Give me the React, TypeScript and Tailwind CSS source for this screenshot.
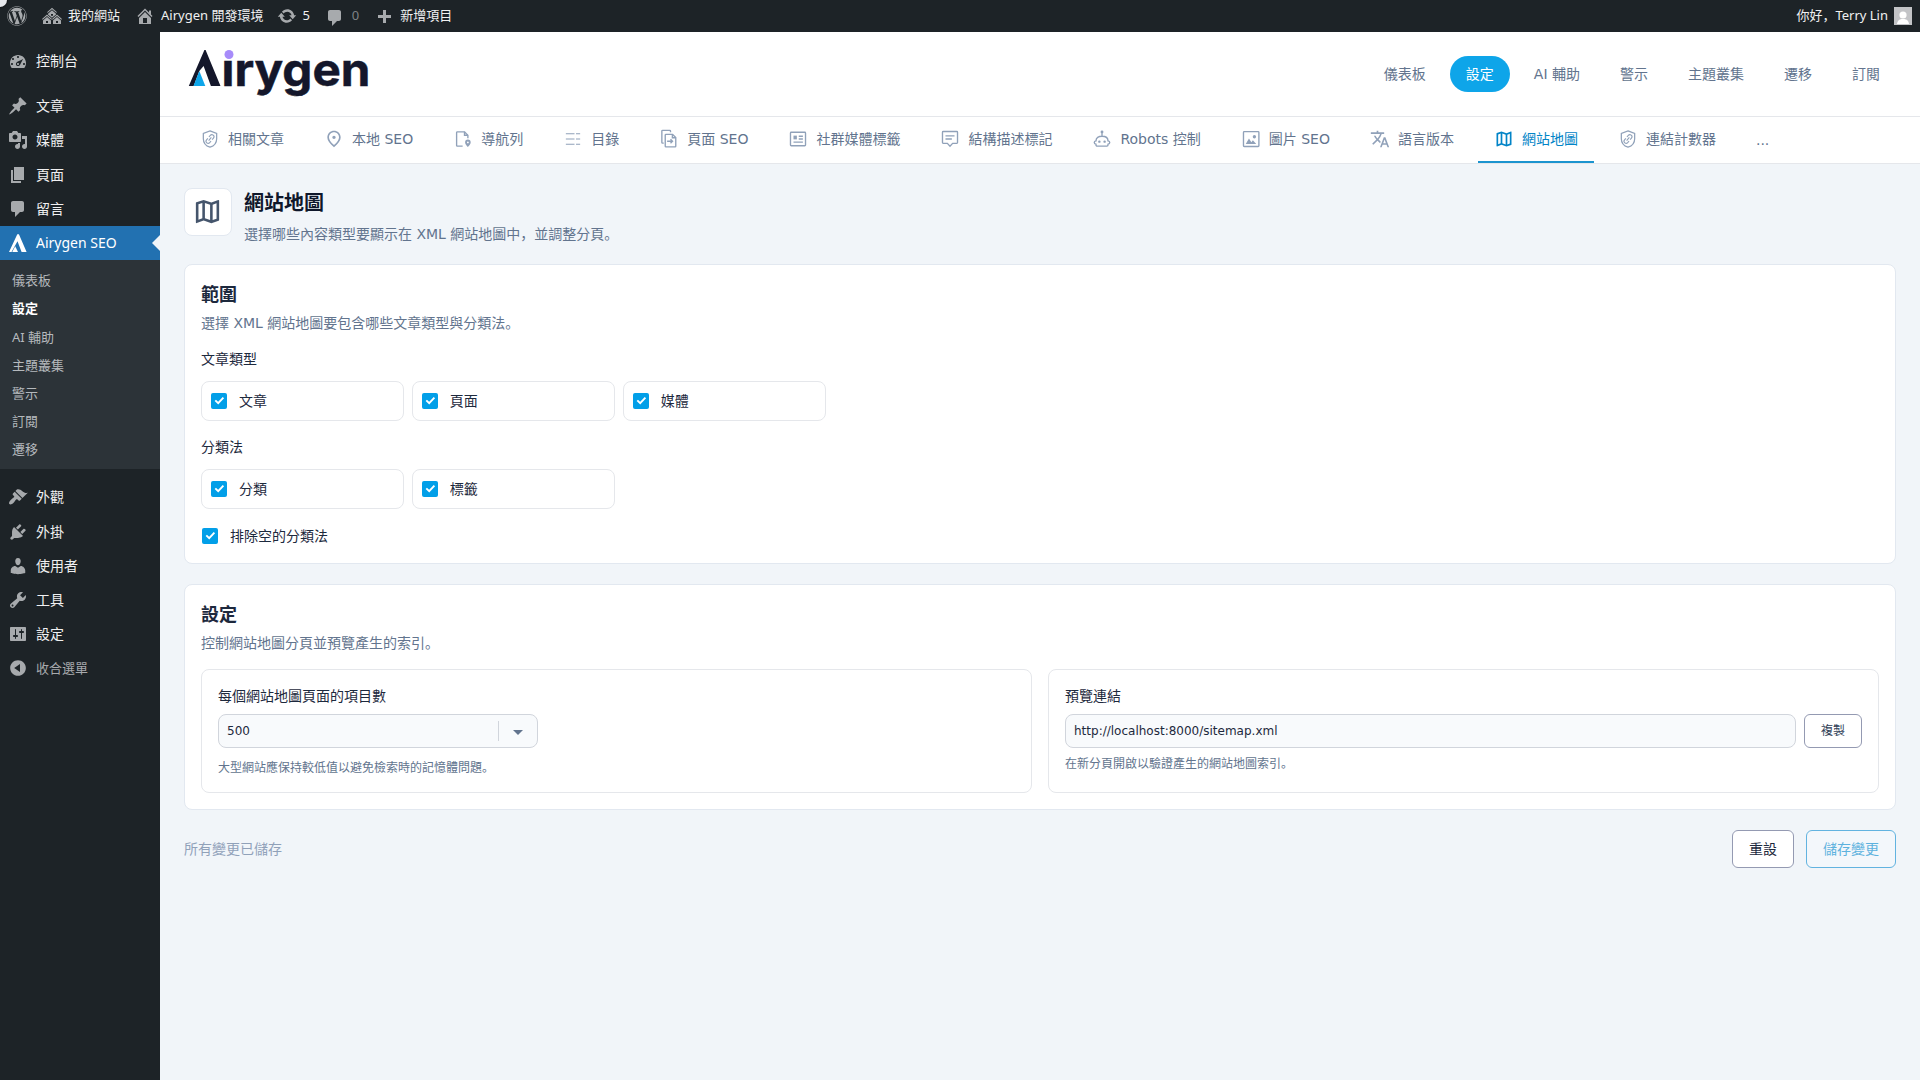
import type { ReactNode, SVGProps } from "react";
import clsx from "clsx";
import { FaWordpress } from "react-icons/fa";
import { MdOutlineMap, MdOutlinePlace, MdTranslate } from "react-icons/md";

type IconProps = SVGProps<SVGSVGElement>;

const DASHICONS = {
  multisite:
    "M14.27 6.87L10 3.14 5.73 6.87 5 6.14l5-4.38 5 4.38zM14 8.42l-4.05 3.43L6 8.38v-.74l4-3.5 4 3.5v.78zM11 9.7V8H9v1.7h2zm-1.73 4.03L5 10 .73 13.73 0 13l5-4.38L10 13zm10 0L15 10l-4.27 3.73L10 13l5-4.38L20 13zM5 11l4 3.5V18H1v-3.5zm10 0l4 3.5V18h-8v-3.5zm-9 6v-2H4v2h2zm10 0v-2h-2v2h2z",
  home: "M16 8.5l1.53 1.53-1.06 1.06L10 4.6l-6.47 6.49-1.06-1.06L10 2.5l4 4v-2h2v4zm-6-2.46l6 5.99V18H4v-5.97zM12 17v-5H8v5h4z",
  update:
    "M10.2 3.28c3.53 0 6.43 2.61 6.92 6h2.08l-3.5 4-3.5-4h2.32c-.45-1.97-2.21-3.45-4.32-3.45-1.45 0-2.73.71-3.54 1.78L4.95 5.66C6.23 4.2 8.11 3.28 10.2 3.28zm-.4 13.44c-3.52 0-6.43-2.61-6.92-6H.8l3.5-4c1.17 1.33 2.33 2.67 3.5 4H5.48c.45 1.97 2.21 3.45 4.32 3.45 1.45 0 2.73-.71 3.54-1.78l1.71 1.95c-1.28 1.46-3.15 2.38-5.25 2.38z",
  comments: "M5 2h9c1.1 0 2 .9 2 2v7c0 1.1-.9 2-2 2h-2l-5 5v-5H5c-1.1 0-2-.9-2-2V4c0-1.1.9-2 2-2z",
  plus: "M17 7v3h-5v5H9v-5H4V7h5V2h3v5h5z",
  dashboard:
    "M3.76 17h12.48c1.1-1.37 1.76-3.11 1.76-5 0-4.42-3.58-8-8-8s-8 3.58-8 8c0 1.89.66 3.63 1.76 5zM9 6c0-.55.45-1 1-1s1 .45 1 1c0 .56-.45 1-1 1s-1-.44-1-1zM4 8c0-.55.45-1 1-1s1 .45 1 1c0 .56-.45 1-1 1s-1-.44-1-1zm4.52 3.4c.84-.83 6.51-3.5 6.51-3.5s-2.66 5.68-3.49 6.51c-.84.84-2.18.84-3.02 0-.83-.83-.83-2.18 0-3.01zM3 13c0-.55.45-1 1-1s1 .45 1 1c0 .56-.45 1-1 1s-1-.44-1-1zm6 0c0-.55.45-1 1-1s1 .45 1 1c0 .56-.45 1-1 1s-1-.44-1-1zm6 0c0-.55.45-1 1-1s1 .45 1 1c0 .56-.45 1-1 1s-1-.44-1-1z",
  post: "M10.44 3.02l1.82-1.82 6.36 6.35-1.83 1.82c-1.05-.68-2.48-.57-3.41.36l-.75.75c-.92.93-1.04 2.35-.35 3.41l-1.83 1.82-2.41-2.41-2.8 2.79c-.42.42-3.38 2.71-3.8 2.29s1.86-3.39 2.28-3.81l2.79-2.79L4.1 9.36l1.83-1.82c1.05.69 2.48.57 3.4-.36l.75-.75c.93-.92 1.05-2.35.36-3.41z",
  media:
    "M13 11V4c0-.55-.45-1-1-1h-1.67L9 1H5L3.67 3H2c-.55 0-1 .45-1 1v7c0 .55.45 1 1 1h10c.55 0 1-.45 1-1zM7 4.5c1.38 0 2.5 1.12 2.5 2.5S8.38 9.5 7 9.5 4.5 8.38 4.5 7 5.62 4.5 7 4.5zM14 6h5v10.5c0 1.38-1.12 2.5-2.5 2.5S14 17.88 14 16.5s1.12-2.5 2.5-2.5c.17 0 .34.02.5.05V9h-3V6zm-4 8.05V13h2v3.5c0 1.38-1.12 2.5-2.5 2.5S7 17.88 7 16.5 8.12 14 9.5 14c.17 0 .34.02.5.05z",
  page: "M6 15V2h10v13H6zm-1 1h8v2H3V5h2v11z",
  appearance:
    "M14.48 11.06L7.41 3.99l1.5-1.5c.5-.56 2.3-.47 3.51.32 1.21.8 1.43 1.28 2.91 2.1 1.18.64 2.45 1.26 4.45.85zm-.71.71L6.7 4.7 4.93 6.47c-.39.39-.39 1.02 0 1.41l1.06 1.06c.39.39.39 1.03 0 1.42-.6.6-1.43 1.11-2.21 1.69-.35.26-.7.53-1.01.84C1.43 14.23.4 16.08 1.4 17.07c.99 1 2.84-.03 4.18-1.36.31-.31.58-.66.85-1.02.57-.78 1.08-1.61 1.69-2.21.39-.39 1.02-.39 1.41 0l1.06 1.06c.39.39 1.02.39 1.41 0z",
  plugins:
    "M13.11 4.36L9.87 7.6 8 5.73l3.24-3.24c.35-.34 1.05-.2 1.56.32.52.51.66 1.21.31 1.55zm-8 1.77l.91-1.12 9.01 9.01-1.19.84c-.71.71-2.63 1.16-3.82 1.16H6.14L4.9 17.26c-.59.59-1.54.59-2.12 0-.59-.58-.59-1.53 0-2.12l1.24-1.24v-3.88c0-1.13.4-3.19 1.09-3.89zm7.26 3.97l3.24-3.24c.34-.35 1.04-.21 1.55.31.52.51.66 1.21.31 1.55l-3.24 3.25z",
  users:
    "M10 9.25c-2.27 0-2.73-3.44-2.73-3.44C7 4.02 7.82 2 9.97 2c2.16 0 2.98 2.02 2.71 3.81 0 0-.41 3.44-2.68 3.44zm0 2.57L12.72 10c2.39 0 4.52 2.33 4.52 4.53v2.49s-3.65 1.13-7.24 1.13c-3.65 0-7.24-1.13-7.24-1.13v-2.49c0-2.25 1.94-4.48 4.47-4.48z",
  tools:
    "M16.68 9.77c-1.34 1.34-3.3 1.67-4.95.99l-5.41 6.52c-.99.99-2.59.99-3.58 0s-.99-2.59 0-3.57l6.52-5.42c-.68-1.65-.35-3.61.99-4.95 1.28-1.28 3.12-1.62 4.72-1.06l-2.89 2.89 2.82 2.82 2.86-2.87c.53 1.58.18 3.39-1.08 4.65zM3.81 16.21c.4.39 1.04.39 1.43 0 .4-.4.4-1.04 0-1.43-.39-.4-1.03-.4-1.43 0-.39.39-.39 1.03 0 1.43z",
  settings:
    "M18 16V4c0-.55-.45-1-1-1H3c-.55 0-1 .45-1 1v12c0 .55.45 1 1 1h14c.55 0 1-.45 1-1zM8 11h1c.55 0 1 .45 1 1s-.45 1-1 1H8v1.5c0 .28-.22.5-.5.5s-.5-.22-.5-.5V13H6c-.55 0-1-.45-1-1s.45-1 1-1h1V5.5c0-.28.22-.5.5-.5s.5.22.5.5V11zm5-2h-1c-.55 0-1-.45-1-1s.45-1 1-1h1V5.5c0-.28.22-.5.5-.5s.5.22.5.5V7h1c.55 0 1 .45 1 1s-.45 1-1 1h-1v5.5c0 .28-.22.5-.5.5s-.5-.22-.5-.5V9z",
  collapse:
    "M10 2.16c4.33 0 7.84 3.51 7.84 7.84s-3.51 7.84-7.84 7.84S2.16 14.33 2.16 10 5.67 2.16 10 2.16zm2 11.72V6.12L6.18 9.97z",
};

type DashiconName = keyof typeof DASHICONS;

function Dashicon({ name, className }: { name: DashiconName; className?: string }) {
  return (
    <svg viewBox="0 0 20 20" fill="currentColor" className={clsx("size-5 shrink-0", className)}>
      <path d={DASHICONS[name]} />
    </svg>
  );
}

function LineIcon({ children, ...props }: IconProps) {
  return (
    <svg viewBox="-1.3 -1.3 26.6 26.6" fill="none" stroke="currentColor" strokeWidth={1.8} {...props}>
      {children}
    </svg>
  );
}

function ShieldLinkIcon(props: IconProps) {
  return (
    <LineIcon viewBox="0 0 24 24" strokeWidth={1.5} {...props}>
      <path d="M12 2.2l8 3v6.4c0 4.9-3.2 8.700-8 10.200-4.800-1.500-8-5.300-8-10.200V5.200z" />
      <g transform="rotate(-50 12 12)" strokeWidth={1.3}>
        <path d="M11 9.500H8.500a2.500 2.500 0 000 5H11M13 9.500h2.500a2.500 2.500 0 010 5H13M9.500 12h5" />
      </g>
    </LineIcon>
  );
}

function PagePinIcon(props: IconProps) {
  return (
    <LineIcon {...props}>
      <path d="M11.500 21.500H4.500a1 1 0 01-1-1v-17a1 1 0 011-1h9.500l4.500 4.500v4" />
      <path d="M14 2.500v4.500h4.500" />
      <path
        d="M18.500 12.800a3.700 3.700 0 00-3.700 3.700c0 2.600 3.700 6 3.700 6s3.700-3.400 3.700-6a3.700 3.700 0 00-3.700-3.700zm0 5a1.200 1.200 0 110-2.400 1.200 1.200 0 010 2.400z"
        fill="currentColor"
        stroke="none"
      />
    </LineIcon>
  );
}

function TocIcon(props: IconProps) {
  return (
    <LineIcon strokeWidth={1.6} {...props}>
      <path d="M2.500 5H14M16 5h5.500M2.500 12H14M16 12h5.500M2.500 19H14M16 19h5.500" />
    </LineIcon>
  );
}

function PageCopyIcon(props: IconProps) {
  return (
    <LineIcon {...props}>
      <path d="M5 17.500H3.500a1 1 0 01-1-1V1.500a1 1 0 011-1H13a1 1 0 011 1V3" />
      <path d="M12 5.800H8a1 1 0 00-1 1v14.700a1 1 0 001 1h12a1 1 0 001-1V10l-4.200-4.200H12z" />
      <path d="M16.500 6v4.300h4.300" />
      <path d="M9.500 15h7M14 12.300l2.700 2.700L14 17.700" />
    </LineIcon>
  );
}

function NewsIcon(props: IconProps) {
  return (
    <LineIcon {...props}>
      <rect x="2" y="3" width="20" height="18" rx="1" />
      <path d="M6 7.500h4.500v5H6z" fill="currentColor" stroke="none" />
      <path d="M13 8.300h5.500M13 12h5.500M6 16.200h12.500" />
    </LineIcon>
  );
}

function CommentLinesIcon(props: IconProps) {
  return (
    <LineIcon {...props}>
      <path d="M3 2h18a1 1 0 011 1v13.800a1 1 0 01-1 1h-5.500L12 21.500l-3.500-3.700H3a1 1 0 01-1-1V3a1 1 0 011-1z" />
      <path d="M6 7.800h12M6 12h8.500" />
    </LineIcon>
  );
}

function RobotIcon(props: IconProps) {
  return (
    <LineIcon {...props}>
      <path d="M4 14.500C4 10.500 7.500 8.300 12 8.300s8 2.200 8 6.200c1.500.2 2.300 1 2.300 2.300 0 1.200-.8 2-2.300 2.200v1a1.500 1.500 0 01-1.500 1.500h-13A1.500 1.500 0 014 20v-1c-1.500-.2-2.300-1-2.300-2.200 0-1.300.8-2.100 2.300-2.300zM12 4v4" />
      <circle cx="12" cy="2.600" r="1.900" fill="currentColor" stroke="none" />
      <circle cx="8.500" cy="15.500" r="1.600" fill="currentColor" stroke="none" />
      <circle cx="15.500" cy="15.500" r="1.600" fill="currentColor" stroke="none" />
    </LineIcon>
  );
}

function PictureIcon(props: IconProps) {
  return (
    <LineIcon {...props}>
      <rect x="2" y="2.200" width="20.500" height="19.800" rx="1" />
      <path d="M5 18.500l4.300-7 3.200 4.700 2-2.400 4.500 4.700z" fill="currentColor" stroke="none" />
      <circle cx="16.500" cy="9" r="2.200" fill="currentColor" stroke="none" />
    </LineIcon>
  );
}

function BrandMark() {
  return (
    <svg viewBox="0 0 20 20" className="size-5 shrink-0" fill="#fff">
      <path d="M9.300 1.200h1.600L18.600 19h-5L9.500 8.200 3.500 19H1z" />
      <path d="M7.200 13.200L10 19H4.200z" />
    </svg>
  );
}

function Logo() {
  return (
    <svg width="190" height="64" viewBox="0 0 190 64" className="block">
      <path d="M16.400 8h1.200l14.900 36h-9.600L15.600 24l-4.300 5L5.700 44H.8z" fill="#14172b" />
      <path d="M11.300 29l6 15H5.500z" fill="#0ea5e9" />
      <text
        x="33.500"
        y="44"
        textLength="149"
        lengthAdjust="spacingAndGlyphs"
        fontSize="46"
        fontWeight="700"
        fill="#14172b"
        stroke="#14172b"
        strokeWidth=".5"
        fontFamily="Inter, sans-serif"
      >
        ırygen
      </text>
      <circle cx="41" cy="12.500" r="4.500" fill="#a78bfa" />
    </svg>
  );
}

const MENU_TOP: { label: string; icon: DashiconName }[] = [
  { label: "文章", icon: "post" },
  { label: "媒體", icon: "media" },
  { label: "頁面", icon: "page" },
  { label: "留言", icon: "comments" },
];

const SUBMENU = ["儀表板", "設定", "AI 輔助", "主題叢集", "警示", "訂閱", "遷移"];

const MENU_BOTTOM: { label: string; icon: DashiconName; muted?: boolean }[] = [
  { label: "外觀", icon: "appearance" },
  { label: "外掛", icon: "plugins" },
  { label: "使用者", icon: "users" },
  { label: "工具", icon: "tools" },
  { label: "設定", icon: "settings" },
  { label: "收合選單", icon: "collapse", muted: true },
];

const NAV = ["儀表板", "設定", "AI 輔助", "警示", "主題叢集", "遷移", "訂閱"];

const TABS: { label: string; icon: (props: { className?: string }) => ReactNode }[] = [
  { label: "相關文章", icon: ShieldLinkIcon },
  { label: "本地 SEO", icon: MdOutlinePlace },
  { label: "導航列", icon: PagePinIcon },
  { label: "目錄", icon: TocIcon },
  { label: "頁面 SEO", icon: PageCopyIcon },
  { label: "社群媒體標籤", icon: NewsIcon },
  { label: "結構描述標記", icon: CommentLinesIcon },
  { label: "Robots 控制", icon: RobotIcon },
  { label: "圖片 SEO", icon: PictureIcon },
  { label: "語言版本", icon: MdTranslate },
  { label: "網站地圖", icon: MdOutlineMap },
  { label: "連結計數器", icon: ShieldLinkIcon },
];

function AdminBar() {
  return (
    <header className="relative flex h-8 items-center overflow-hidden bg-[#1d2327] pl-[7px] pr-2 text-[13px] text-[#f0f0f1]">
      <span className="absolute -left-[7px] -top-[7px] size-[14px] rounded-full bg-gray-200 shadow-[0_0_3px_#000]" />
      <FaWordpress className="size-5 text-[#a7aaad]" />
      <div className="ml-[15px] flex items-center gap-1.5">
        <Dashicon name="multisite" className="text-[#a7aaad]" />
        <span>我的網站</span>
      </div>
      <div className="ml-[15px] flex items-center gap-1.5">
        <Dashicon name="home" className="text-[#a7aaad]" />
        <span>Airygen 開發環境</span>
      </div>
      <div className="ml-3.5 flex items-center gap-[5px]">
        <Dashicon name="update" className="text-[#a7aaad]" />
        <span>5</span>
      </div>
      <div className="ml-[15px] flex items-center gap-[7px] text-[#a7aaad]">
        <Dashicon name="comments" className="mt-1" />
        <span className="opacity-70">0</span>
      </div>
      <div className="ml-[15px] flex items-center gap-1.5">
        <Dashicon name="plus" className="mt-[3px] text-[#a7aaad]" />
        <span>新增項目</span>
      </div>
      <div className="ml-auto flex items-center gap-1.5">
        <span>你好，Terry Lin</span>
        <svg viewBox="0 0 18 18" className="size-[18px]">
          <rect width="18" height="18" fill="#c3c4c7" />
          <circle cx="9" cy="8" r="3.600" fill="#fff" />
          <path d="M3 17c.5-3.500 2.500-4.600 4.500-5h3c2 .4 4 1.500 4.500 5z" fill="#fff" />
        </svg>
      </div>
    </header>
  );
}

function MenuItem({ label, icon, muted }: { label: string; icon: DashiconName; muted?: boolean }) {
  return (
    <li
      className={clsx(
        "flex h-[34.2px] items-center gap-2 pl-2",
        muted ? "text-[13px] text-[#a7aaad]" : "text-sm text-[#f0f0f1]"
      )}
    >
      <Dashicon name={icon} className="text-[#a7aaad]" />
      {label}
    </li>
  );
}

function Sidebar() {
  return (
    <aside className="w-40 shrink-0 bg-[#1d2327] pt-3">
      <ul>
        <MenuItem label="控制台" icon="dashboard" />
        <li className="h-[11px]" />
        {MENU_TOP.map((item) => (
          <MenuItem key={item.label} {...item} />
        ))}
        <li className="relative flex h-[34px] items-center gap-2 bg-[#2271b1] pl-2 text-sm text-white">
          <BrandMark />
          Airygen SEO
          <span className="absolute right-0 top-[9px] border-y-8 border-r-8 border-y-transparent border-r-slate-100" />
        </li>
      </ul>
      <ul className="bg-[#2c3338] pb-[5px] pt-[7px] text-[13px]">
        {SUBMENU.map((label) => (
          <li
            key={label}
            className={clsx(
              "flex h-[28.2px] items-center pl-3",
              label === "設定" ? "font-semibold text-white" : "text-[#b5b9bd]"
            )}
          >
            {label}
          </li>
        ))}
      </ul>
      <ul className="pt-[11px]">
        {MENU_BOTTOM.map((item) => (
          <MenuItem key={item.label} {...item} />
        ))}
      </ul>
    </aside>
  );
}

function TopNav() {
  return (
    <div className="flex h-[85px] items-center justify-between border-b border-gray-200 bg-white pl-7 pr-6">
      <Logo />
      <nav className="flex gap-2">
        {NAV.map((label) => (
          <a
            key={label}
            className={clsx(
              "flex h-9 items-center rounded-full px-4",
              label === "設定" ? "bg-[#0ea5e9] text-white" : "text-slate-500"
            )}
          >
            {label}
          </a>
        ))}
      </nav>
    </div>
  );
}

function TabBar() {
  return (
    <div className="flex h-[47px] gap-2 border-b border-gray-200 bg-white pl-6">
      {TABS.map(({ label, icon: Icon }) => {
        const active = label === "網站地圖";
        return (
          <a
            key={label}
            className={clsx(
              "flex items-center gap-2 border-b-2 px-4",
              active ? "border-[#1c94cf] text-[#0284c7]" : "border-transparent text-slate-500"
            )}
          >
            <Icon className={clsx("size-5", !active && "text-slate-400")} />
            {label}
          </a>
        );
      })}
      <a className="flex items-center px-4 text-slate-500">...</a>
    </div>
  );
}

function Checkbox() {
  return (
    <span className="flex size-4 shrink-0 items-center justify-center rounded-[2px] bg-[#029fe8]">
      <svg viewBox="0 0 16 16" className="size-4" fill="none" stroke="#fff" strokeWidth="1.900">
        <path d="M4.300 7.300l2.900 2.900 5.200-5.600" />
      </svg>
    </span>
  );
}

function CheckboxGroup({ title, options }: { title: string; options: string[] }) {
  return (
    <div className="mt-4">
      <p className="leading-5 text-slate-800">{title}</p>
      <div className="mt-3 grid w-[624.6px] grid-cols-3 gap-2">
        {options.map((option) => (
          <label
            key={option}
            className="flex h-10 items-center gap-3 rounded-lg border border-gray-200 px-[9px] text-slate-800"
          >
            <Checkbox />
            {option}
          </label>
        ))}
      </div>
    </div>
  );
}

function Card({ title, description, children }: { title: string; description: string; children: ReactNode }) {
  return (
    <section className="mt-5 rounded-lg border border-slate-200 bg-white p-4">
      <h2 className="text-lg font-semibold text-slate-800">{title}</h2>
      <p className="mt-1 leading-5 text-slate-500">{description}</p>
      {children}
    </section>
  );
}

export default function App() {
  return (
    <div className="flex h-[1080px] w-[1920px] flex-col overflow-hidden bg-slate-100 font-['Noto_Sans','Noto_Sans_CJK_SC',sans-serif]">
      <AdminBar />
      <div className="flex flex-1">
        <Sidebar />
        <main className="min-w-0 flex-1 font-['DejaVu_Sans','Noto_Sans_CJK_SC',sans-serif] text-sm">
          <TopNav />
          <TabBar />
          <div className="p-6">
            <div className="flex gap-3">
              <div className="flex size-12 items-center justify-center rounded-lg border border-slate-200 bg-white pb-0.5 pr-0.5">
                <MdOutlineMap className="size-[31px] text-slate-600" />
              </div>
              <div>
                <h1 className="mt-px text-xl leading-7 font-bold text-slate-900">網站地圖</h1>
                <p className="mt-[7px] leading-5 text-slate-500">選擇哪些內容類型要顯示在 XML 網站地圖中，並調整分頁。</p>
              </div>
            </div>

            <Card title="範圍" description="選擇 XML 網站地圖要包含哪些文章類型與分類法。">
              <CheckboxGroup title="文章類型" options={["文章", "頁面", "媒體"]} />
              <CheckboxGroup title="分類法" options={["分類", "標籤"]} />
              <label className="mt-4 flex h-[22px] items-center gap-3 pl-px text-slate-800">
                <Checkbox />
                排除空的分類法
              </label>
            </Card>

            <Card title="設定" description="控制網站地圖分頁並預覽產生的索引。">
              <div className="mt-4 grid grid-cols-2 gap-4">
                <div className="rounded-lg border border-gray-200 p-4">
                  <p className="leading-5 text-slate-800">每個網站地圖頁面的項目數</p>
                  <div className="mt-2 flex h-[34px] w-80 items-center rounded-lg border border-gray-300 bg-slate-50 pl-2 text-xs text-slate-800">
                    <span className="flex-1">500</span>
                    <span className="flex h-5 w-[39px] items-center justify-center border-l border-gray-300">
                      <span className="mt-0.5 border-x-5 border-t-5 border-x-transparent border-t-slate-500" />
                    </span>
                  </div>
                  <p className="mt-3 text-xs text-slate-500">大型網站應保持較低值以避免檢索時的記憶體問題。</p>
                </div>
                <div className="rounded-lg border border-gray-200 p-4">
                  <p className="leading-5 text-slate-800">預覽連結</p>
                  <div className="mt-2 flex h-[34px] gap-2 text-xs">
                    <div className="flex flex-1 items-center rounded-lg border border-gray-300 bg-slate-50 px-2 text-slate-800">
                      http://localhost:8000/sitemap.xml
                    </div>
                    <button className="w-[58px] rounded-md border border-[#949ab2] bg-white text-slate-700">複製</button>
                  </div>
                  <p className="mt-2 text-xs text-slate-500">在新分頁開啟以驗證產生的網站地圖索引。</p>
                </div>
              </div>
            </Card>

            <div className="mt-5 flex h-[38px] items-center">
              <span className="flex-1 text-slate-400">所有變更已儲存</span>
              <button className="h-full w-[62px] rounded-md border border-[#949ab2] bg-white text-slate-800">重設</button>
              <button className="ml-3 h-full w-[90px] rounded-md border border-[#62b3e0] bg-[#f3f7fb] text-[#5db2de]">
                儲存變更
              </button>
            </div>
          </div>
        </main>
      </div>
    </div>
  );
}
